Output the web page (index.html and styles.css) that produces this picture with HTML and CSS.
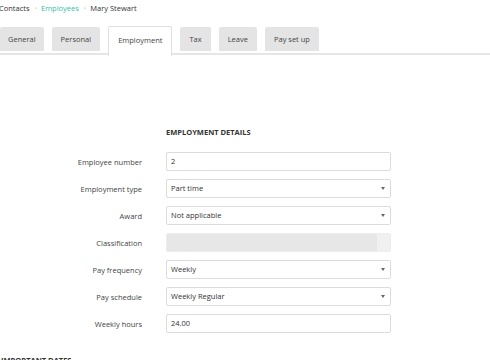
FILE: index.html
```html
<!DOCTYPE html>
<html>
<head>
<meta charset="utf-8">
<link rel="stylesheet" href="styles.css">
</head>
<body>
<div class="page">
  <nav class="breadcrumb">
    <span class="crumb">Contacts</span>
    <span class="sep">&gt;</span>
    <span class="crumb link">Employees</span>
    <span class="sep">&gt;</span>
    <span class="crumb">Mary Stewart</span>
  </nav>
  <div class="tabs">
    <div class="tab">General</div>
    <div class="tab">Personal</div>
    <div class="tab active">Employment</div>
    <div class="tab">Tax</div>
    <div class="tab">Leave</div>
    <div class="tab">Pay set up</div>
  </div>
  <section class="section">
    <div class="grid">
      <div></div>
      <h2 class="heading">EMPLOYMENT DETAILS</h2>

      <label class="label">Employee number</label>
      <div class="field">2</div>

      <label class="label">Employment type</label>
      <div class="field select">Part time<span class="arrow"></span></div>

      <label class="label">Award</label>
      <div class="field select">Not applicable<span class="arrow"></span></div>

      <label class="label">Classification</label>
      <div class="field disabled"><span class="fill"></span><span class="end"></span></div>

      <label class="label">Pay frequency</label>
      <div class="field select">Weekly<span class="arrow"></span></div>

      <label class="label">Pay schedule</label>
      <div class="field select">Weekly Regular<span class="arrow"></span></div>

      <label class="label">Weekly hours</label>
      <div class="field">24.00</div>
    </div>
    <h2 class="heading dates">IMPORTANT DATES</h2>
  </section>
</div>
</body>
</html>
```

FILE: styles.css
```css
html, body {
  margin: 0;
  padding: 0;
  background: #fff;
}
body {
  font-family: "Open Sans", "DejaVu Sans", sans-serif;
  font-size: 7.5px;
  color: #444;
  overflow: hidden;
  width: 490px;
  height: 360px;
}
.page {
  margin-left: -1px;
}
.breadcrumb {
  display: flex;
  align-items: center;
  gap: 4px;
  height: 16px;
  color: #333;
}
.breadcrumb .link {
  color: #35bfa9;
}
.breadcrumb .sep {
  color: #aaa;
  font-size: 6px;
  transform: scaleX(0.7);
}
.tabs {
  display: flex;
  align-items: flex-start;
  gap: 8px;
  margin-top: 10px;
  height: 27px;
  border-bottom: 2px solid #e6e6e6;
  padding-left: 1px;
}
.tab {
  background: #e4e4e4;
  height: 24px;
  line-height: 24px;
  margin-top: 1px;
  padding: 0 9px;
  border-radius: 2px 2px 0 0;
  color: #444;
}
.tab:first-child {
  padding-left: 8px;
  padding-right: 8px;
}
.tab.active {
  background: #fff;
  border: 1px solid #e0e0e0;
  border-bottom: none;
  margin-top: 0;
  height: 29px;
  line-height: 26px;
  position: relative;
  z-index: 1;
}
.section {
  padding-top: 72px;
}
.grid {
  display: grid;
  grid-template-columns: 143px 225px;
  column-gap: 24px;
  row-gap: 8px;
  align-items: center;
}
.heading {
  margin: 0 0 7px 0;
  font-size: 7.5px;
  font-weight: 700;
  color: #333;
}
.label {
  text-align: right;
  color: #444;
}
.field {
  position: relative;
  height: 17px;
  line-height: 17px;
  border: 1px solid #dcdcdc;
  border-radius: 2px;
  padding: 0 4px;
  color: #333;
  background: #fff;
}
.field.select .arrow {
  position: absolute;
  right: 5px;
  top: 7px;
  width: 0;
  height: 0;
  border-left: 2px solid transparent;
  border-right: 2px solid transparent;
  border-top: 3px solid #666;
}
.field.disabled {
  display: flex;
  padding: 0;
  border-color: #ededed;
  background: #e7e7e7;
}
.field.disabled .fill {
  flex: 1;
}
.field.disabled .end {
  width: 13px;
  background: #f0f0f0;
}
.heading.dates {
  margin-top: 22px;
  margin-left: 2px;
}
```
